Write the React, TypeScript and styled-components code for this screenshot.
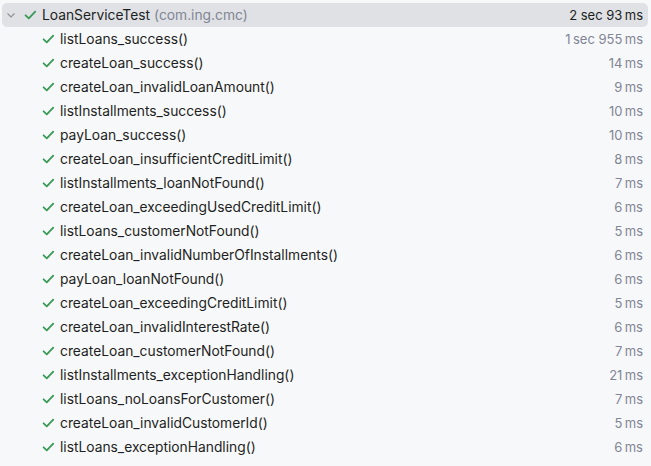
import React from "react";
import styled, { createGlobalStyle } from "styled-components";

const Global = createGlobalStyle`
  html, body { margin: 0; padding: 0; background: #f7f8fa; }
  body { font-family: Inter, "Noto Sans", sans-serif; }
`;

const Tree = styled.div`
  width: 651px;
  height: 466px;
  background: #f7f8fa;
  padding: 3px 3px 0 2px;
  box-sizing: border-box;
  display: flex;
  flex-direction: column;
`;

const Row = styled.div<{ $root?: boolean }>`
  height: 24px;
  display: flex;
  align-items: center;
  padding-left: ${(p) => (p.$root ? 3 : 39)}px;
  padding-right: 5px;
  border-radius: 5px;
  background: ${(p) => (p.$root ? "#dfe1e5" : "transparent")};
  font-size: 13.8px;
  color: #1e1f22;
`;

const Chevron = styled.svg`
  width: 12px;
  height: 12px;
  margin-right: 6px;
  flex: none;
`;

const Check = styled.svg`
  width: 15px;
  height: 14px;
  margin-right: 4px;
  flex: none;
`;

const Name = styled.span`
  white-space: nowrap;
`;

const Pkg = styled.span`
  color: #818594;
  margin-left: 4px;
`;

const Time = styled.span<{ $root?: boolean }>`
  margin-left: auto;
  font-size: 13px;
  color: ${(p) => (p.$root ? "#1e1f22" : "#818594")};
  white-space: nowrap;
`;

const CheckIcon = () => (
  <Check viewBox="0 0 15 14">
    <path d="M2.6 7.3 L5.8 10.4 L12.2 3.6" fill="none" stroke="#3a9a57" strokeWidth="1.8" strokeLinecap="round" strokeLinejoin="round" />
  </Check>
);

const tests: [string, string][] = [
  ["listLoans_success()", "1\u2009sec 955\u2009ms"],
  ["createLoan_success()", "14\u2009ms"],
  ["createLoan_invalidLoanAmount()", "9\u2009ms"],
  ["listInstallments_success()", "10\u2009ms"],
  ["payLoan_success()", "10\u2009ms"],
  ["createLoan_insufficientCreditLimit()", "8\u2009ms"],
  ["listInstallments_loanNotFound()", "7\u2009ms"],
  ["createLoan_exceedingUsedCreditLimit()", "6\u2009ms"],
  ["listLoans_customerNotFound()", "5\u2009ms"],
  ["createLoan_invalidNumberOfInstallments()", "6\u2009ms"],
  ["payLoan_loanNotFound()", "6\u2009ms"],
  ["createLoan_exceedingCreditLimit()", "5\u2009ms"],
  ["createLoan_invalidInterestRate()", "6\u2009ms"],
  ["createLoan_customerNotFound()", "7\u2009ms"],
  ["listInstallments_exceptionHandling()", "21\u2009ms"],
  ["listLoans_noLoansForCustomer()", "7\u2009ms"],
  ["createLoan_invalidCustomerId()", "5\u2009ms"],
  ["listLoans_exceptionHandling()", "6\u2009ms"],
];

export default function App() {
  return (
    <>
      <Global />
      <Tree>
        <Row $root>
          <Chevron viewBox="0 0 12 12">
            <path d="M2.5 4.5 L6 8 L9.5 4.5" fill="none" stroke="#8c8f96" strokeWidth="1.1" />
          </Chevron>
          <CheckIcon />
          <Name>LoanServiceTest</Name>
          <Pkg>(com.ing.cmc)</Pkg>
          <Time $root>2 sec 93{"\u2009"}ms</Time>
        </Row>
        {tests.map(([n, t]) => (
          <Row key={n}>
            <CheckIcon />
            <Name>{n}</Name>
            <Time>{t}</Time>
          </Row>
        ))}
      </Tree>
    </>
  );
}
